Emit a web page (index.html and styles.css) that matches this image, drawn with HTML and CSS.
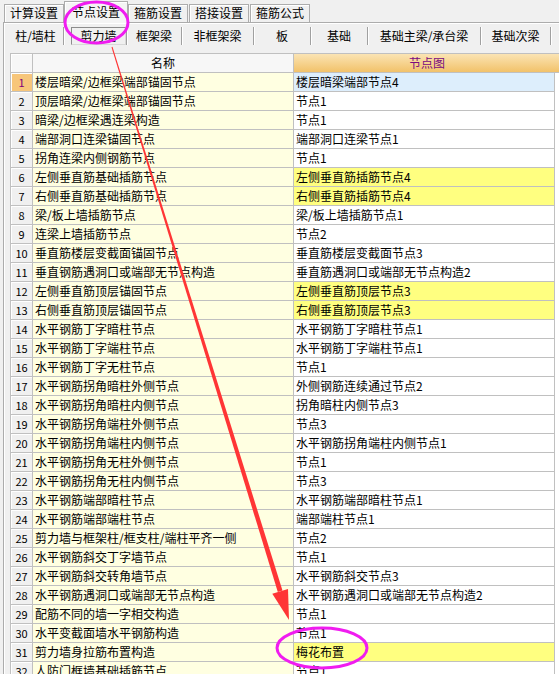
FILE: index.html
```html
<!DOCTYPE html>
<html lang="zh-CN">
<head>
<meta charset="utf-8">
<title>节点设置</title>
<link rel="stylesheet" href="styles.css">
</head>
<body>
<div class="app">
  <div class="tabs">
    <div class="tab">计算设置</div>
    <div class="tab active">节点设置</div>
    <div class="tab">箍筋设置</div>
    <div class="tab">搭接设置</div>
    <div class="tab">箍筋公式</div>
  </div>
  <div class="panel">
    <div class="subtabs">
      <div class="subtab">柱/墙柱</div>
      <div class="subtab selected"><span class="sel-box">剪力墙</span></div>
      <div class="subtab">框架梁</div>
      <div class="subtab">非框架梁</div>
      <div class="subtab">板</div>
      <div class="subtab">基础</div>
      <div class="subtab">基础主梁/承台梁</div>
      <div class="subtab">基础次梁</div>
    </div>
    <div class="grid">
      <div class="row head"><div class="c num"></div><div class="c name">名称</div><div class="c val">节点图</div></div>
      <div class="row"><div class="c num cur">1</div><div class="c name">楼层暗梁/边框梁端部锚固节点</div><div class="c val blue">楼层暗梁端部节点4</div><div class="fill"></div></div>
      <div class="row"><div class="c num">2</div><div class="c name">顶层暗梁/边框梁端部锚固节点</div><div class="c val">节点1</div><div class="fill"></div></div>
      <div class="row"><div class="c num">3</div><div class="c name">暗梁/边框梁遇连梁构造</div><div class="c val">节点1</div><div class="fill"></div></div>
      <div class="row"><div class="c num">4</div><div class="c name">端部洞口连梁锚固节点</div><div class="c val">端部洞口连梁节点1</div><div class="fill"></div></div>
      <div class="row"><div class="c num">5</div><div class="c name">拐角连梁内侧钢筋节点</div><div class="c val">节点1</div><div class="fill"></div></div>
      <div class="row"><div class="c num">6</div><div class="c name">左侧垂直筋基础插筋节点</div><div class="c val yellow">左侧垂直筋插筋节点4</div><div class="fill"></div></div>
      <div class="row"><div class="c num">7</div><div class="c name">右侧垂直筋基础插筋节点</div><div class="c val yellow">右侧垂直筋插筋节点4</div><div class="fill"></div></div>
      <div class="row"><div class="c num">8</div><div class="c name">梁/板上墙插筋节点</div><div class="c val">梁/板上墙插筋节点1</div><div class="fill"></div></div>
      <div class="row"><div class="c num">9</div><div class="c name">连梁上墙插筋节点</div><div class="c val">节点2</div><div class="fill"></div></div>
      <div class="row"><div class="c num">10</div><div class="c name">垂直筋楼层变截面锚固节点</div><div class="c val">垂直筋楼层变截面节点3</div><div class="fill"></div></div>
      <div class="row"><div class="c num">11</div><div class="c name">垂直钢筋遇洞口或端部无节点构造</div><div class="c val">垂直筋遇洞口或端部无节点构造2</div><div class="fill"></div></div>
      <div class="row"><div class="c num">12</div><div class="c name">左侧垂直筋顶层锚固节点</div><div class="c val yellow">左侧垂直筋顶层节点3</div><div class="fill"></div></div>
      <div class="row"><div class="c num">13</div><div class="c name">右侧垂直筋顶层锚固节点</div><div class="c val yellow">右侧垂直筋顶层节点3</div><div class="fill"></div></div>
      <div class="row"><div class="c num">14</div><div class="c name">水平钢筋丁字暗柱节点</div><div class="c val">水平钢筋丁字暗柱节点1</div><div class="fill"></div></div>
      <div class="row"><div class="c num">15</div><div class="c name">水平钢筋丁字端柱节点</div><div class="c val">水平钢筋丁字端柱节点1</div><div class="fill"></div></div>
      <div class="row"><div class="c num">16</div><div class="c name">水平钢筋丁字无柱节点</div><div class="c val">节点1</div><div class="fill"></div></div>
      <div class="row"><div class="c num">17</div><div class="c name">水平钢筋拐角暗柱外侧节点</div><div class="c val">外侧钢筋连续通过节点2</div><div class="fill"></div></div>
      <div class="row"><div class="c num">18</div><div class="c name">水平钢筋拐角暗柱内侧节点</div><div class="c val">拐角暗柱内侧节点3</div><div class="fill"></div></div>
      <div class="row"><div class="c num">19</div><div class="c name">水平钢筋拐角端柱外侧节点</div><div class="c val">节点3</div><div class="fill"></div></div>
      <div class="row"><div class="c num">20</div><div class="c name">水平钢筋拐角端柱内侧节点</div><div class="c val">水平钢筋拐角端柱内侧节点1</div><div class="fill"></div></div>
      <div class="row"><div class="c num">21</div><div class="c name">水平钢筋拐角无柱外侧节点</div><div class="c val">节点1</div><div class="fill"></div></div>
      <div class="row"><div class="c num">22</div><div class="c name">水平钢筋拐角无柱内侧节点</div><div class="c val">节点3</div><div class="fill"></div></div>
      <div class="row"><div class="c num">23</div><div class="c name">水平钢筋端部暗柱节点</div><div class="c val">水平钢筋端部暗柱节点1</div><div class="fill"></div></div>
      <div class="row"><div class="c num">24</div><div class="c name">水平钢筋端部端柱节点</div><div class="c val">端部端柱节点1</div><div class="fill"></div></div>
      <div class="row"><div class="c num">25</div><div class="c name">剪力墙与框架柱/框支柱/端柱平齐一侧</div><div class="c val">节点2</div><div class="fill"></div></div>
      <div class="row"><div class="c num">26</div><div class="c name">水平钢筋斜交丁字墙节点</div><div class="c val">节点1</div><div class="fill"></div></div>
      <div class="row"><div class="c num">27</div><div class="c name">水平钢筋斜交转角墙节点</div><div class="c val">水平钢筋斜交节点3</div><div class="fill"></div></div>
      <div class="row"><div class="c num">28</div><div class="c name">水平钢筋遇洞口或端部无节点构造</div><div class="c val">水平钢筋遇洞口或端部无节点构造2</div><div class="fill"></div></div>
      <div class="row"><div class="c num">29</div><div class="c name">配筋不同的墙一字相交构造</div><div class="c val">节点1</div><div class="fill"></div></div>
      <div class="row"><div class="c num">30</div><div class="c name">水平变截面墙水平钢筋构造</div><div class="c val">节点1</div><div class="fill"></div></div>
      <div class="row"><div class="c num">31</div><div class="c name">剪力墙身拉筋布置构造</div><div class="c val yellow">梅花布置</div><div class="fill"></div></div>
      <div class="row"><div class="c num">32</div><div class="c name">人防门框墙基础插筋节点</div><div class="c val">节点1</div><div class="fill"></div></div>
    </div>
  </div>
  <svg class="overlay" width="559" height="674" viewBox="0 0 559 674" xmlns="http://www.w3.org/2000/svg">
    <polygon points="111.5,47.2 112.5,46.8 282.5,590.6 277.8,592.1" fill="#ff3535"/>
    <polygon points="272.3,593.8 288,588.9 289,620" fill="#ff3535"/>
    <ellipse cx="96.5" cy="22.5" rx="31.5" ry="20.5" fill="none" stroke="#f01cf0" stroke-width="3"/>
    <ellipse cx="322" cy="648" rx="45" ry="20" fill="none" stroke="#f01cf0" stroke-width="3"/>
  </svg>
</div>
</body>
</html>
```

FILE: styles.css
```css
* { box-sizing: border-box; }

html, body {
  margin: 0;
  height: 674px;
  overflow: hidden;
}

body {
  background: #f0f0f0;
  font-family: "Noto Sans CJK SC", "DejaVu Sans", sans-serif;
  font-size: 12px;
  color: #000;
}

.app {
  position: relative;
  width: 559px;
  height: 674px;
  overflow: hidden;
}

/* top tab strip */
.tabs {
  display: flex;
  align-items: flex-end;
  height: 22px;
  padding-left: 4px;
}

.tab {
  height: 18px;
  line-height: 16px;
  padding: 0 5px;
  margin-right: 1px;
  border: 1px solid #acacac;
  border-bottom: none;
  background: #f0f0f0;
  box-shadow: inset 1px 1px 0 #fff;
  white-space: nowrap;
}

.tab.active {
  position: relative;
  z-index: 1;
  height: 22px;
  line-height: 19px;
  padding: 0 7px;
  margin: 0 0 -1px -1px;
  background: #f4f4f4;
}

/* panel */
.panel {
  margin-left: 3px;
  border-top: 1px solid #acacac;
  border-left: 1px solid #acacac;
  box-shadow: inset 1px 1px 0 #fff;
}

.subtabs {
  display: grid;
  grid-template-columns: 56px 63px 55px 72px 57px 57px 113px 70px;
  margin-left: 4px;
  padding: 4px 0 2px;
  height: 24px;
}

.subtab {
  height: 18px;
  line-height: 17px;
  text-align: center;
  white-space: nowrap;
  border-right: 1px solid #a0a0a0;
  box-shadow: 1px 0 0 #fff;
}

.subtab.selected {
  padding-left: 7px;
}

.sel-box {
  display: block;
  height: 18px;
  line-height: 16px;
  border: 1px solid #8c8c8c;
  border-right-color: #d8d8d8;
  border-bottom-color: #d8d8d8;
  background: #f0f0f0;
}

/* grid */
.grid {
  margin: 6px 0 0 6px;
  border-top: 1px solid #c0c0c0;
  border-left: 1px solid #c0c0c0;
  width: 550px;
}

.row {
  display: grid;
  grid-template-columns: 22px 261px 261px 5px;
  height: 19px;
}

.c {
  border-right: 1px solid #c0c0c0;
  border-bottom: 1px solid #c0c0c0;
  line-height: 18px;
  padding: 0 2px;
  white-space: nowrap;
  overflow: hidden;
}

.num {
  background: #f0f0f0;
  box-shadow: inset 1px 1px 0 #fff;
  text-align: center;
  padding: 0;
  font-size: 11px;
}

.num.cur {
  background: #f7c67a;
  color: #80007a;
}

.name {
  background: #ffffe1;
}

.val {
  background: #fff;
}

.val.blue {
  background: #ddeefc;
}

.val.yellow {
  background: #ffff80;
}

.fill {
  background: #fff;
}

.head .num,
.head .name {
  background: #f7f7f7;
  text-align: center;
}

.head .val {
  grid-column: span 2;
  border-right: none;
  text-align: center;
  color: #7a0a80;
  background: linear-gradient(#fbe4b4, #f2c26a);
}

/* annotation overlay */
.overlay {
  position: absolute;
  left: 0;
  top: 0;
  z-index: 5;
  pointer-events: none;
}
```
